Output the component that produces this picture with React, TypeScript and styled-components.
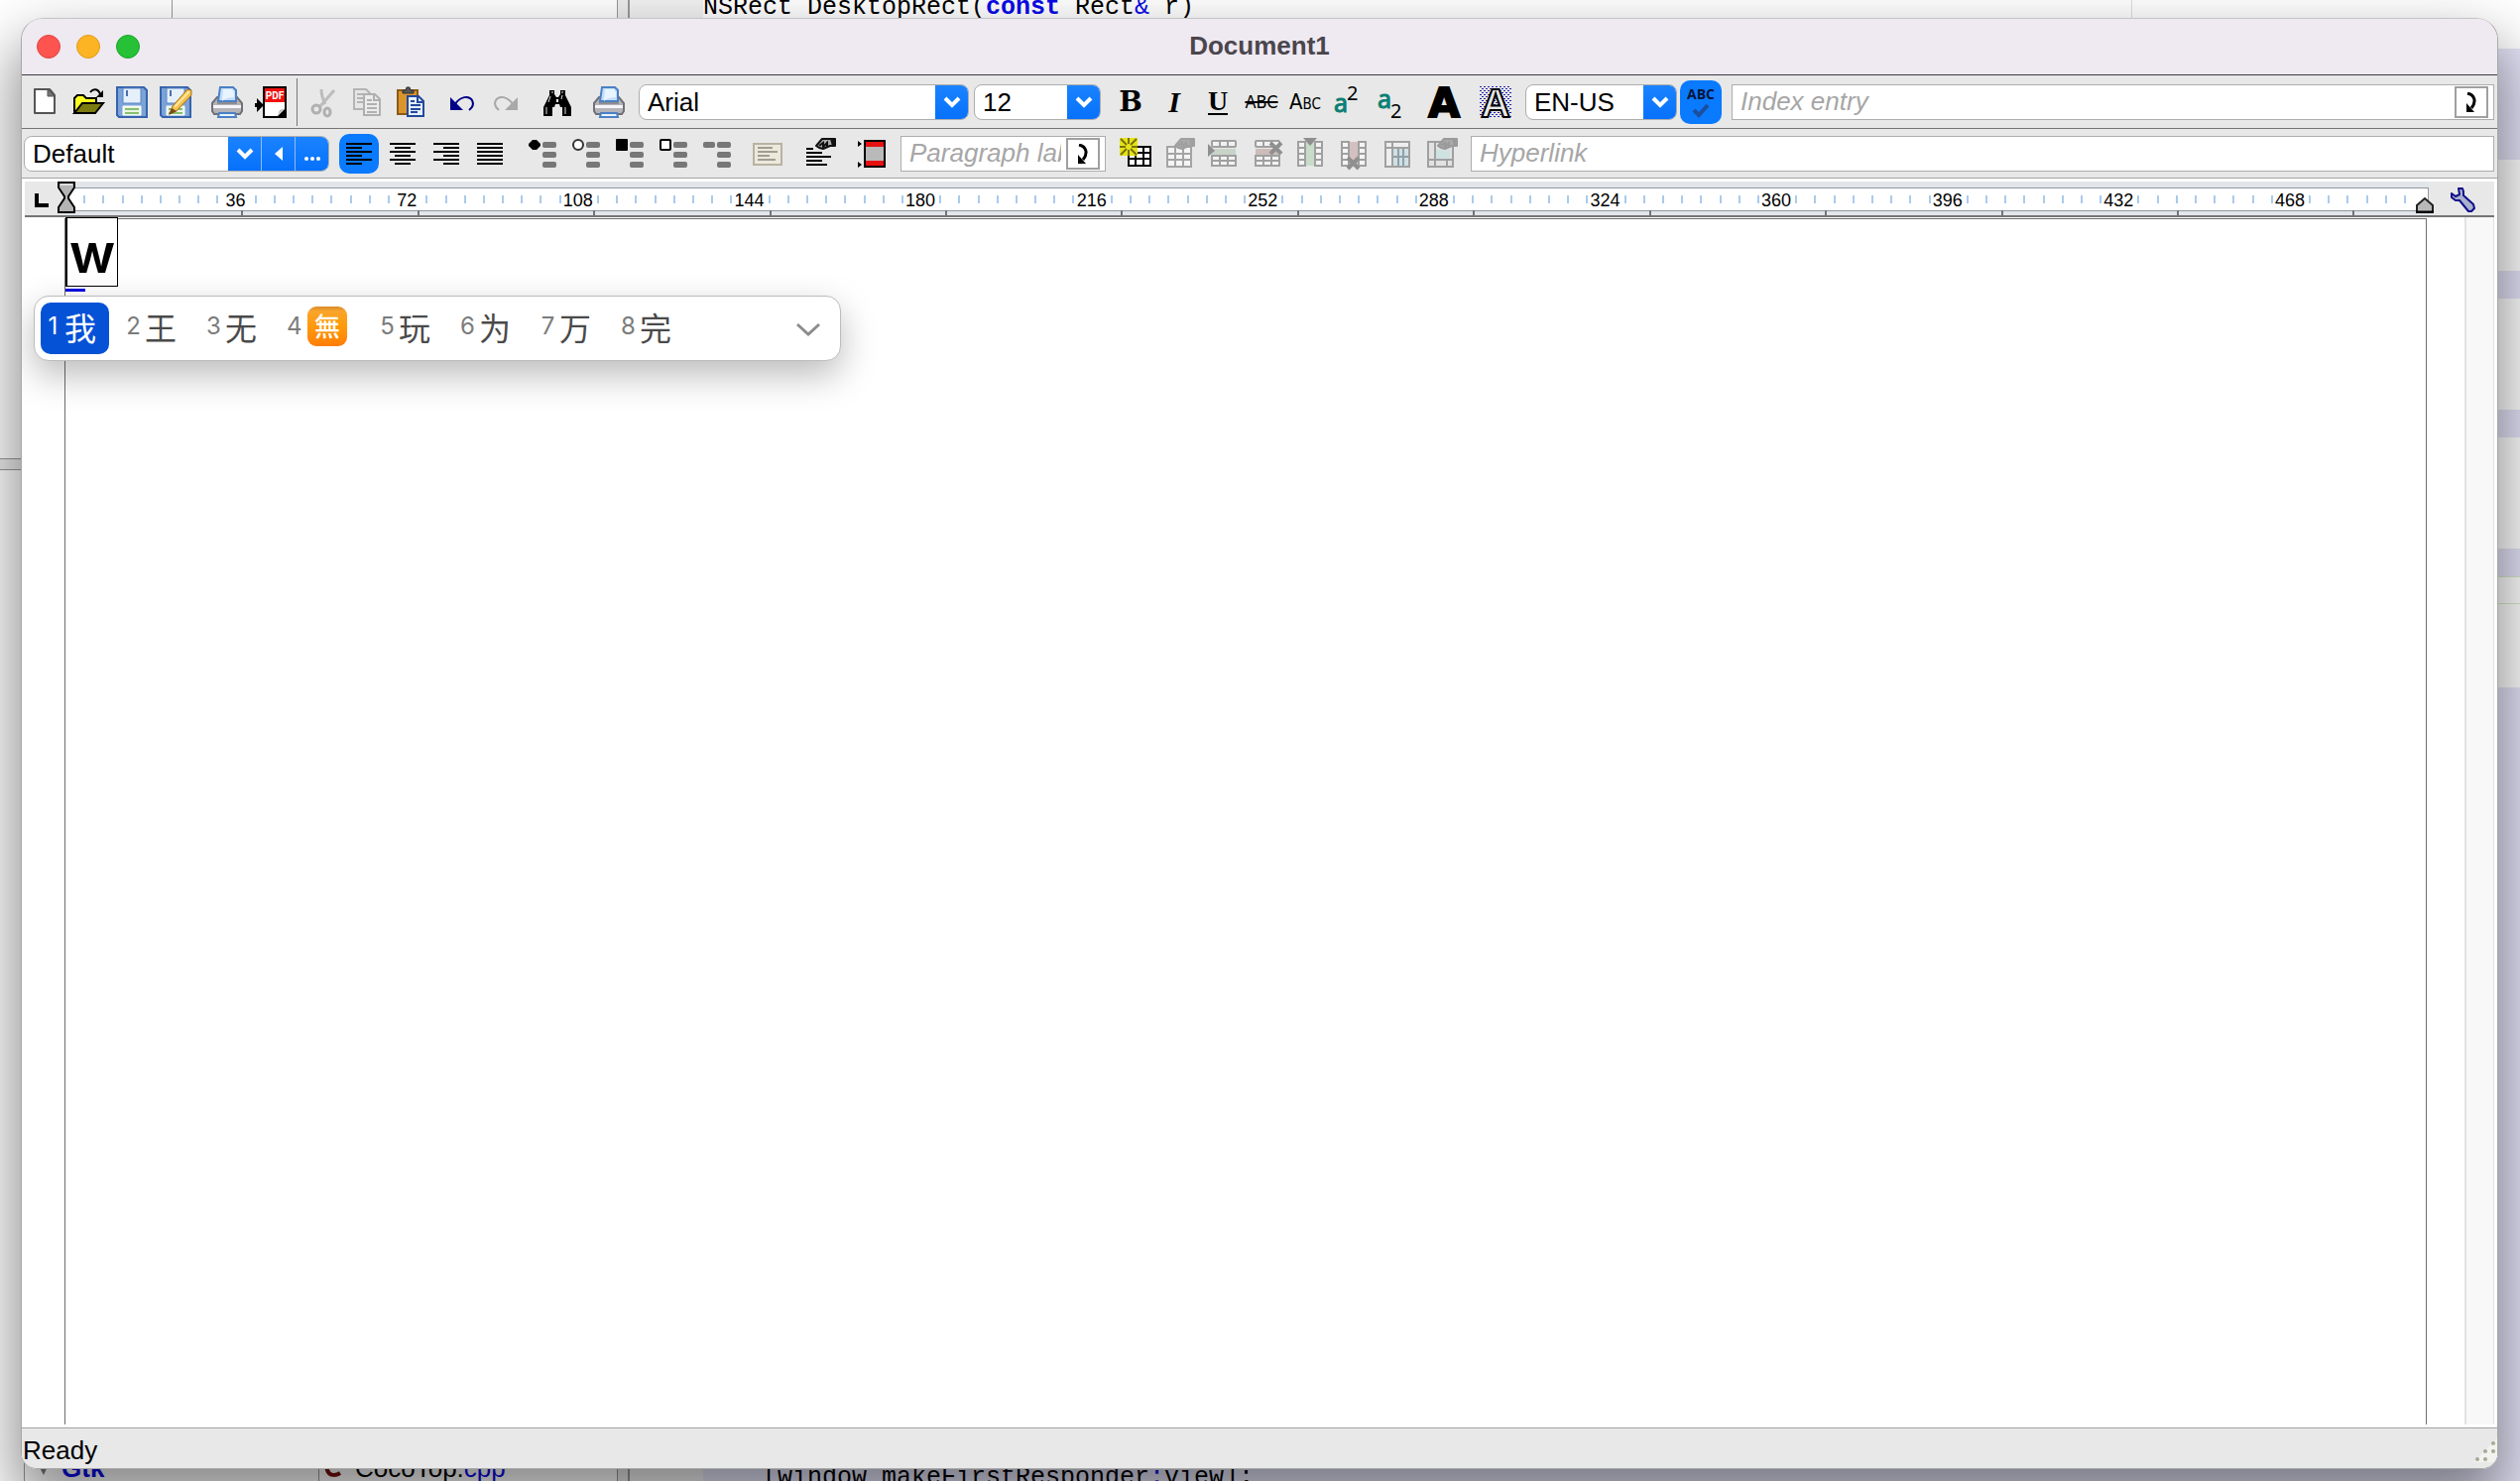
import React from "react";
import styled, { createGlobalStyle, css } from "styled-components";

const SANS = '"Liberation Sans", Arial, sans-serif';
const MONO = '"Liberation Mono", "Courier New", monospace';
const SYSTEM = 'Inter, "Noto Sans CJK SC", sans-serif';

const GlobalStyle = createGlobalStyle`
  * { box-sizing: border-box; }
  body { margin: 0; background: #fff; font-family: ${SANS}; font-size: 26px; color: #000; }
  button, input, select { font: inherit; color: inherit; margin: 0; }
`;

/* ---------- editor behind the window ---------- */

const Desktop = styled.div`
  position: relative;
  height: 100vh;
  overflow: hidden;
  padding: 18px 22px 12px 21px;
  display: flex;
`;

const Backdrop = styled.div`
  position: absolute;
  inset: 0;
  display: flex;
  overflow: hidden;
  background: #fff;
`;

const TreePane = styled.div`
  width: 622px;
  flex: none;
  display: flex;
  flex-direction: column;
`;

const TreeTop = styled.div`
  height: 462px;
  display: flex;
`;

const TreeColumn = styled.div`
  width: 174px;
  border-right: 1px solid #999;
`;

const Splitter = styled.div`
  height: 12px;
  background: #ececec;
  border: solid #999;
  border-width: 1px 0;
`;

const FileList = styled.div`
  flex: 1;
  display: grid;
  grid-template-columns: 296px 1fr;
  align-items: end;
  margin-left: 24px;
  border-left: 1px solid #999;
  margin-bottom: -4px;
  line-height: 28px;
`;

const FileCell = styled.div<{ $divided?: boolean }>`
  height: 34px;
  display: flex;
  align-items: center;
  gap: 11px;
  padding-left: ${(p) => (p.$divided ? 5 : 11)}px;
  border-left: ${(p) => (p.$divided ? "1px solid #999" : "0")};
`;

const Blue = styled.span<{ $bold?: boolean }>`
  color: #0a0ae8;
  font-weight: ${(p) => (p.$bold ? 700 : 400)};
`;

const PaneScroll = styled.div`
  width: 13px;
  flex: none;
  background: #ececec;
  border: solid #999;
  border-width: 0 2px 0 1px;
`;

const Gutter = styled.div`
  width: 74px;
  flex: none;
  background: #f2f2f2;
`;

const Code = styled.div`
  flex: 1;
  display: flex;
  flex-direction: column;
  margin: -7px 0 -11px;
  font-family: ${MONO};
  font-size: 25px;
  line-height: 28px;
  white-space: pre;
`;

const Band = styled.div<{ $lines: number; $tint?: boolean; $ruled?: boolean }>`
  flex: none;
  height: ${(p) => p.$lines * 28}px;
  background: ${(p) => (p.$tint ? "#e4e4f8" : "#fff")};
  ${(p) =>
    p.$ruled &&
    css`
      border: solid #d8ecc8;
      border-width: 1px 0;
    `}
`;

const LastBand = styled.div`
  flex: 1;
  display: flex;
  align-items: flex-end;
  padding-left: 60px;
  background: #e4e4f8;
`;

const MarginRule = styled.div`
  width: 1441px;
  height: 100%;
  border-right: 1px solid #ddd;
  line-height: 30px;
`;

/* ---------- window chrome ---------- */

const Window = styled.div`
  position: relative;
  flex: 1;
  min-width: 0;
  display: flex;
  flex-direction: column;
  background: #fff;
  border: 1px solid #a8a8a8;
  border-top-color: #c4c4c4;
  border-radius: 22px 22px 16px 16px;
  overflow: hidden;
`;

const WindowShadow = styled.div`
  position: relative;
  flex: 1;
  min-width: 0;
  display: flex;
  border-radius: 22px 22px 16px 16px;
  box-shadow: 0 30px 60px 6px rgba(0, 0, 0, 0.46);
`;

const TitleBar = styled.header`
  height: 57px;
  flex: none;
  display: grid;
  grid-template-columns: 1fr auto 1fr;
  align-items: center;
  padding: 0 15px;
  background: #efe9f1;
  border-bottom: 1px solid #3f3a44;
`;

const Lights = styled.div`
  display: flex;
  gap: 16px;
`;

const Light = styled.button<{ $color: string; $edge: string }>`
  width: 24px;
  height: 24px;
  padding: 0;
  border-radius: 50%;
  background: ${(p) => p.$color};
  border: 1px solid ${(p) => p.$edge};
`;

const Title = styled.h1`
  margin: 0;
  padding-bottom: 2px;
  font: 700 26px/32px ${SANS};
  color: #4a464d;
`;

const Toolbar = styled.div<{ $second?: boolean }>`
  height: ${(p) => (p.$second ? 50 : 54)}px;
  flex: none;
  display: flex;
  align-items: center;
  gap: 8px;
  padding: 0 3px 0 ${(p) => (p.$second ? 2 : 1)}px;
  background: #e8e8e8;
  border-bottom: 1px solid ${(p) => (p.$second ? "#a4a4a4" : "#757575")};
`;

const Group = styled.div<{ $gap?: number }>`
  flex: none;
  display: flex;
  align-items: center;
  gap: ${(p) => p.$gap ?? 0}px;
`;

const Divider = styled.div`
  width: 1px;
  height: 48px;
  margin: 0 -4px;
  background: #777;
`;

const ToolButton = styled.button<{ $active?: boolean }>`
  width: ${(p) => (p.$active ? 40 : 44)}px;
  height: 40px;
  margin: 0 ${(p) => (p.$active ? 2 : 0)}px;
  padding: 0;
  display: flex;
  align-items: center;
  justify-content: center;
  border: 0;
  border-radius: 10px;
  background: ${(p) => (p.$active ? "#0a7aff" : "transparent")};
  svg { display: block; flex: none; overflow: visible; }
`;

const SpellButton = styled.button`
  width: 42px;
  height: 44px;
  padding: 6px 0 0;
  flex: none;
  margin: 0 2px 0 -5px;
  display: flex;
  flex-direction: column;
  align-items: center;
  gap: 2px;
  border: 0;
  border-radius: 10px;
  background: #0a7aff;
  color: #06143a;
  font: 700 14px/16px "Open Sans", sans-serif;
`;

const Glyph = styled.span<{ $kind: "bold" | "italic" | "underline" | "strike" | "caps" }>`
  font-family: "DejaVu Serif", serif;
  font-size: 28px;
  line-height: 32px;
  font-weight: 700;
  ${(p) => p.$kind === "italic" && css`font-style: italic; font-size: 30px; font-family: "Liberation Serif", serif;`}
  ${(p) =>
    p.$kind === "underline" &&
    css`
      font-size: 28px;
      line-height: 24px;
      font-family: "Liberation Serif", serif;
      border-bottom: 2px solid #000;
    `}
  ${(p) =>
    (p.$kind === "strike" || p.$kind === "caps") &&
    css`
      font: 400 18px/32px "Liberation Sans Narrow", "DejaVu Sans Condensed", sans-serif;
    `}
  ${(p) => p.$kind === "strike" && css`text-decoration: line-through; text-decoration-thickness: 2px;`}
  ${(p) => p.$kind === "caps" && css`font-size: 22px; font-variant: small-caps;`}
`;

const Combo = styled.div<{ $width: number }>`
  width: ${(p) => p.$width}px;
  height: 36px;
  flex: none;
  display: flex;
  position: relative;
  border: 1px solid #adadad;
  border-radius: 8px;
  background: #fff;
  overflow: hidden;
`;

const Select = styled.select`
  flex: 1;
  min-width: 0;
  height: 34px;
  padding: 0 0 0 8px;
  border: 0;
  background: transparent;
  appearance: none;
  outline: none;
`;

const Cap = styled.span`
  position: absolute;
  inset: 0 0 0 auto;
  width: 33px;
  display: flex;
  align-items: center;
  justify-content: center;
  background: linear-gradient(#1b83ff, #0671fb);
  pointer-events: none;
`;

const StyleCap = styled(Cap)`
  position: static;
  flex: none;
`;

const CapButton = styled.button`
  width: 34px;
  height: 34px;
  padding: 0;
  display: flex;
  align-items: center;
  justify-content: center;
  border: 0;
  border-left: 1px solid #8dbcf5;
  background: linear-gradient(#1b83ff, #0671fb);
`;

const Field = styled.div<{ $width?: number }>`
  ${(p) => (p.$width ? css`width: ${p.$width}px; flex: none;` : css`flex: 1; min-width: 0;`)}
  height: 36px;
  display: flex;
  align-items: center;
  gap: 5px;
  border: 1px solid #adadad;
  background: #fff;
  padding-right: 5px;
`;

const FieldInput = styled.input`
  flex: 1;
  min-width: 0;
  height: 34px;
  padding: 0 0 0 8px;
  border: 0;
  outline: none;
  background: transparent;
  font-style: italic;
  &::placeholder { color: #a6a6a6; opacity: 1; }
`;

const FieldButton = styled.button`
  width: 34px;
  height: 32px;
  padding: 0;
  display: flex;
  align-items: center;
  justify-content: center;
  border: 2px solid #a0a0a0;
  background: #fff;
`;

/* ---------- ruler ---------- */

const Ruler = styled.div`
  flex: none;
  height: 36px;
  margin: 3px 3px 0;
  display: flex;
  background: #e8e8e8;
  border-bottom: 2px solid #747474;
`;

const TabStop = styled.button`
  width: 41px;
  padding: 12px 0 0 10px;
  display: flex;
  border: 0;
  background: transparent;
`;

const Scale = styled.div`
  position: relative;
  flex: 1;
  display: flex;
  flex-direction: column;
  padding-top: 6px;
  background: #e2e6ea;
`;

const Ticks = styled.div`
  flex: none;
  height: 24px;
  display: grid;
  grid-template-columns: 5fr repeat(123, 10fr) 7fr;
  align-items: center;
  background: #fff;
  border: solid #8f979f;
  border-width: 1px 1px 1px 0;
`;

const Tick = styled.span`
  min-width: 0;
  display: flex;
  justify-content: center;
  font-size: 18px;
  line-height: 20px;
  &::before {
    content: "";
    width: 2px;
    height: 8px;
    background: #a9cbee;
  }
`;

const TickLabel = styled(Tick)`
  padding: 2px 2px 0 0;
  &::before { display: none; }
`;

const Majors = styled.div`
  flex: 1;
  display: grid;
  grid-template-columns: 101fr repeat(12, 100fr) 42fr;
  margin-top: -1px;
`;

const Major = styled.span`
  border-right: 2px solid #747474;
  &:last-child { border: 0; }
`;

const Marker = styled.svg<{ $side: "left" | "right" }>`
  position: absolute;
  display: block;
  top: 0;
  ${(p) => (p.$side === "left" ? "left: -8px;" : "right: -5px;")}
`;

const RulerEnd = styled.button`
  width: 66px;
  padding: 6px 0 0 22px;
  display: flex;
  border: 0;
  background: transparent;
`;

/* ---------- document ---------- */

const Workspace = styled.main`
  flex: 1;
  min-height: 0;
  display: flex;
  padding: 0 3px 3px 43px;
`;

const Page = styled.section`
  position: relative;
  flex: 1;
  margin: 1px 38px 0 0;
  border: solid #6e6e6e;
  border-width: 1px 1px 0;
`;

const Composition = styled.div`
  width: 53px;
  height: 70px;
  margin-top: -2px;
  border: 1px solid #000;
  border-left-width: 2px;
  background: #fff;
  font: 600 55px/70px Inter, sans-serif;
  display: flex;
  justify-content: center;
`;

const InputMark = styled.div`
  width: 20px;
  height: 3px;
  margin-top: 2px;
  background: #0808e0;
`;

const Track = styled.div`
  width: 30px;
  flex: none;
  background: #f8f8f8;
  border: solid #e2e2e2;
  border-width: 0 1px 0 2px;
`;

const Candidates = styled.div`
  position: absolute;
  left: -32px;
  top: 77px;
  width: 814px;
  height: 66px;
  padding: 6px;
  display: flex;
  gap: 12px;
  border: 1px solid #bcbcbc;
  border-radius: 15px;
  background: #fff;
  box-shadow: 0 14px 36px rgba(0, 0, 0, 0.27);
  font-family: ${SYSTEM};
`;

const Candidate = styled.button<{ $selected?: boolean; $wide?: boolean }>`
  width: ${(p) => (p.$wide ? 82 : 69)}px;
  height: 52px;
  padding: 0 0 4px 5px;
  display: flex;
  align-items: center;
  gap: 4px;
  border: 0;
  border-radius: 10px;
  background: ${(p) => (p.$selected ? "#0552d6" : "transparent")};
  color: ${(p) => (p.$selected ? "#fff" : "#4a4a4a")};
  font: 400 32px/44px "Noto Sans CJK SC", sans-serif;
`;

const Num = styled.span<{ $selected?: boolean }>`
  width: 15px;
  text-align: center;
  font: 400 24px/44px ${SYSTEM};
  color: ${(p) => (p.$selected ? "#fff" : "#7c7c7c")};
`;

const Stamp = styled.span`
  width: 40px;
  height: 40px;
  margin-left: 2px;
  flex: none;
  border-radius: 9px;
  background: linear-gradient(#d98a2b, #f9a52c 12%, #ff9a0a 50%, #ff7e06);
  color: #fff;
  font: 500 26px/38px "Noto Sans CJK TC", sans-serif;
`;

const More = styled.button`
  margin: 0 14px 0 auto;
  padding: 0 0 4px;
  border: 0;
  background: transparent;
`;

const StatusBar = styled.footer`
  height: 41px;
  flex: none;
  display: flex;
  align-items: center;
  justify-content: space-between;
  padding: 4px 0 0 1px;
  background: #e8e8e8;
  border-top: 1px solid #a4a4a4;
`;

/* ---------- icons ---------- */

const Svg = ({ children, size = 32 }: { children: React.ReactNode; size?: number }) => (
  <svg width={size} height={size} viewBox="0 0 32 32" fill="none" aria-hidden="true">
    {children}
  </svg>
);

const Chevron = () => (
  <svg width="18" height="14" viewBox="0 0 18 14" fill="none" aria-hidden="true">
    <path d="M2 3 9 10 16 3" stroke="#fff" strokeWidth="4" />
  </svg>
);

const NewIcon = () => (
  <Svg>
    <path d="M6 3h15l5 6v18H6z" fill="#fff" stroke="#555" strokeWidth="2" strokeLinejoin="round" />
    <path d="M19 3v7h7z" fill="#777" stroke="#555" />
  </Svg>
);

const OpenIcon = () => (
  <Svg>
    <path d="M2 27V12l3-3h6l3 3h10v5" fill="#ffff20" stroke="#000" strokeWidth="2" />
    <path d="M2 27 10 17h21l-8 10z" fill="#7c7c10" stroke="#000" strokeWidth="2" />
    <path d="M18 6c3-4 8-4 10 2" stroke="#000" strokeWidth="2" />
    <path d="M31 4v7h-7z" fill="#000" />
  </Svg>
);

const Disk = () => (
  <>
    <path d="M1 1h27l3 3v27H3l-2-2z" fill="#7ba3d8" stroke="#3563ad" strokeWidth="2" />
    <path d="M7 2h18v15H7z" fill="#e6f0fb" stroke="#5b87c6" />
    <path d="M11 4v6" stroke="#4a70b0" strokeWidth="2" />
    <path d="M7 20h18v9H7z" fill="#eaf5e3" stroke="#fff" />
    <path d="M9 23h14M9 27h14" stroke="#86c070" strokeWidth="2" />
  </>
);

const SaveIcon = () => <Svg><Disk /></Svg>;

const SaveAsIcon = () => (
  <Svg>
    <Disk />
    <path d="m10 28 3-8L28 3l4 1v5L17 25z" fill="#f4c04a" stroke="#a8701c" />
    <path d="m15 21 15-16" stroke="#ffe79a" strokeWidth="2" />
    <path d="m9 29 3-7 5 3z" fill="#7d4a1a" />
  </Svg>
);

const PrintIcon = () => (
  <Svg>
    <path d="M1 17l5-6h20l5 6v8l-2 3H3l-2-3z" fill="#b4b4b8" stroke="#707076" strokeWidth="2" />
    <path d="M7 15 9 1h13l3 3v11z" fill="#c3defb" stroke="#4b80c4" strokeWidth="2" />
    <path d="M12 3h9l2 3v5c-5 0-9 1-12 4z" fill="#e8f4ff" />
    <path d="M2 19h28v3H2z" fill="#f6f6f8" />
    <path d="M6 17h20" stroke="#8c8c92" strokeWidth="2" />
    <path d="M8 27h16l1 4H7z" fill="#e8f3ff" stroke="#4b80c4" strokeWidth="2" />
  </Svg>
);

const PdfIcon = () => (
  <Svg>
    <path d="M9 1h22v30H9z" fill="#fff" stroke="#000" strokeWidth="2" />
    <path d="M10 2h20v14H10z" fill="#f01010" />
    <text x="20" y="13" textAnchor="middle" fontSize="10" fontWeight="700" fill="#fff" fontFamily="Roboto, sans-serif">
      PDF
    </text>
    <path d="M31 22v9h-9z" fill="#000" />
    <path d="m23 29 2-5 5-2" fill="#bbb" />
    <path d="M0 17h2v-5l7 7-7 7v-5H0z" fill="#000" />
  </Svg>
);

const CutIcon = () => (
  <Svg>
    <path d="M14 3c0 6 1 9 4 15M27 4 13 20" stroke="#bcbcbc" strokeWidth="3" />
    <ellipse cx="9" cy="23" rx="4" ry="4" stroke="#b0b0b0" strokeWidth="3" />
    <ellipse cx="20" cy="26" rx="3" ry="4" stroke="#b0b0b0" strokeWidth="3" />
  </Svg>
);

const CopyIcon = () => (
  <Svg>
    <path d="M3 3h12l4 4v16H3z" fill="#e6e6e6" stroke="#b4b4b4" strokeWidth="2" />
    <path d="M6 8h6M6 12h6M6 16h6" stroke="#b4b4b4" strokeWidth="2" />
    <path d="M13 8h11l5 5v16H13z" fill="#ececec" stroke="#b0b0b0" strokeWidth="2" />
    <path d="M23 8v6h6M16 14h5M16 18h10M16 22h10M16 26h10" stroke="#b0b0b0" strokeWidth="2" />
  </Svg>
);

const PasteIcon = () => (
  <Svg>
    <path d="M3 4h20v24H3z" fill="#d9952c" stroke="#8c5a14" strokeWidth="2" />
    <path d="M8 7V4h3l1-3h3l1 3h3v3z" fill="#555" stroke="#333" />
    <path d="M13 10h11l5 5v15H13z" fill="#e4effd" stroke="#24489a" strokeWidth="2" />
    <path d="M23 10v6h6M16 15h4M16 19h10M16 23h10M16 26h7" stroke="#24489a" strokeWidth="2" />
  </Svg>
);

const UndoIcon = () => (
  <Svg>
    <path d="M9 18C14 10 23 9 26 14c2 4 1 7-3 10" stroke="#000088" strokeWidth="2" />
    <path d="M4 11v13h13z" fill="#000088" />
  </Svg>
);

const RedoIcon = () => (
  <Svg>
    <path d="M23 18C18 10 9 9 6 14c-2 4-1 7 3 10" stroke="#a9a9a9" strokeWidth="2" />
    <path d="M28 11v13H15z" fill="#a9a9a9" />
  </Svg>
);

const FindIcon = () => (
  <Svg>
    <path d="M8 4h5v4l2 3h2l2-3V4h5v5l6 12v9h-9v-9h-2l-1-3h-4l-1 3h-2v9H2v-9L8 9z" fill="#000" />
    <path d="M5 21v7M24 21v7M9 10 7 16M21 9l-1 4M10 6h2M20 6h2" stroke="#ddd" />
    <path d="M16 13v3" stroke="#eee" strokeWidth="2" />
  </Svg>
);

const SuperIcon = ({ sub }: { sub?: boolean }) => (
  <Svg>
    <text x="1" y={sub ? 22 : 26} fontSize="25" fontFamily="Noto Sans, sans-serif" fill="#0a8074" stroke="#0a8074">a</text>
    <text x="14" y={sub ? 32 : 14} fontSize="20" fontFamily="Noto Sans, sans-serif" fill="#000">2</text>
  </Svg>
);

const LetterIcon = ({ outline }: { outline?: boolean }) => (
  <Svg>
    <defs>
      <pattern id="dots" width="4" height="4" patternUnits="userSpaceOnUse">
        <path d="M0 0h2v1H0zM2 2h2v1H2z" fill="#2424b0" />
      </pattern>
    </defs>
    {outline && <path d="M0 0h32v31H0z" fill="url(#dots)" />}
    <text
      x="16"
      y="31"
      textAnchor="middle"
      fontSize="41"
      fontWeight="700"
      fontFamily={outline ? "Liberation Sans, sans-serif" : "DejaVu Sans, sans-serif"}
      fill={outline ? "#e8e8e8" : "#000"}
      stroke="#000"
      strokeWidth="2"
    >
      A
    </text>
  </Svg>
);

const AlignIcon = ({ mode }: { mode: "left" | "center" | "right" | "full" }) => (
  <Svg>
    {[0, 1, 2, 3, 4, 5].map((i) => {
      const w = mode === "full" || i % 2 === 0 ? 26 : 16;
      const x = mode === "left" ? 3 : mode === "right" ? 29 - w : 16 - w / 2;
      return <rect key={i} x={x} y={5 + i * 4} width={w} height="2" fill="#000" />;
    })}
  </Svg>
);

const ListIcon = ({ mark }: { mark: "disc" | "circle" | "square" | "box" | "dash" }) => (
  <Svg>
    {[4, 14, 24].map((y) => (
      <rect key={y} x="17" y={y} width="14" height="6" rx="2" fill="#777" />
    ))}
    {mark === "disc" && <path d="M7 2h4l4 4v2l-4 4H7L3 8V6z" fill="#000" />}
    {mark === "circle" && <circle cx="9" cy="7" r="5" fill="#fff" stroke="#333" strokeWidth="2" />}
    {mark === "square" && <rect x="3" y="1" width="12" height="12" rx="1" fill="#000" />}
    {mark === "box" && <rect x="4" y="2" width="10" height="10" rx="1" fill="#fff" stroke="#000" strokeWidth="2" />}
    {mark === "dash" && <rect x="3" y="4" width="12" height="6" rx="2" fill="#777" />}
  </Svg>
);

const ParagraphIcon = () => (
  <Svg>
    <path d="M2 6h28v21H2z" fill="#ece8dc" stroke="#b8b2a2" strokeWidth="2" />
    <path d="M6 10h15M6 14h20M6 18h12M6 22h18" stroke="#a29d90" strokeWidth="2" />
  </Svg>
);

const HandShape = ({ tone, x = 0 }: { tone: string; x?: number }) => (
  <g transform={`translate(${x} 0)`}>
    <path d="M12 8 18 1h13v7h-5l-7 3-4-1z" fill="#aaa" stroke={tone} strokeWidth="2" strokeLinejoin="round" />
    <path d="m15 8 4-3v4l4-4v4" stroke={tone} strokeWidth="2" />
    <path d="M26 1h5v7h-3z" fill={tone} />
  </g>
);

const ParaPropsIcon = () => (
  <Svg>
    <path d="M3 11h7M3 15h16M3 19h25M3 23h16M3 27h21" stroke="#000" strokeWidth="2" />
    <HandShape tone="#111" x={1} />
  </Svg>
);

const FrameIcon = () => (
  <Svg>
    <rect x="10" y="3" width="20" height="26" fill="#b9b9b9" stroke="#000" strokeWidth="2" />
    <path d="M11 4h18v5H11zM11 23h18v5H11z" fill="#e81010" />
    <path d="M3 3l4 3-4 3zM3 24l4 3-4 3z" fill="#000" />
  </Svg>
);

const TableShape = ({ tone, fill = "#f4f4f4" }: { tone: string; fill?: string }) => (
  <>
    <path d="M4 9h24v20H4z" fill={fill} stroke={tone} strokeWidth="2" />
    <path d="M4 16h24M4 22h24M12 9v20M20 9v20" stroke={tone} strokeWidth="2" />
  </>
);

const TableInsertIcon = () => (
  <Svg>
    <path d="M9 9h22v19H9z" fill="#fff" stroke="#000" strokeWidth="2" />
    <path d="M9 15h22M9 21h22M16 9v19M24 9v19" stroke="#000" strokeWidth="2" />
    <path d="M0 0h18v18H0z" fill="#e6e21a" />
    <path d="M9 0v6M9 12v6M0 9h6M12 9h6M1 1l6 6M17 1l-6 6M1 17l6-6M17 17l-6-6" stroke="#77730a" strokeWidth="2" />
  </Svg>
);

const TablePropsIcon = () => (
  <Svg>
    <TableShape tone="#a4a4a4" />
    <HandShape tone="#a0a0a0" />
  </Svg>
);

const RowIcon = ({ remove }: { remove?: boolean }) => (
  <Svg>
    <rect x="5" y="3" width="24" height="6" rx="1" fill="#f2f2f2" stroke="#a0a0a0" strokeWidth="2" />
    <path d="M5 11h24v6H5z" fill={remove ? "#cdbcbc" : "#c8d4c8"} />
    <path d="M5 18h24v10H5zM5 23h24M13 18v10M21 18v10M13 3v6M21 3v6" fill="#f2f2f2" stroke="#a0a0a0" strokeWidth="2" />
    {remove ? (
      <path d="m20 5 11 11m0-11L20 16" stroke="#8f8f8f" strokeWidth="4" />
    ) : (
      <path d="M1 6v13l7-6z" fill="#8f8f8f" />
    )}
  </Svg>
);

const ColumnIcon = ({ remove }: { remove?: boolean }) => (
  <Svg>
    <path d="M12 4h8v24h-8z" fill={remove ? "#d3c0c0" : "#c8dcc8"} />
    <path d="M4 4h7v24H4zM21 4h7v24h-7zM4 10h7M4 16h7M4 22h7M21 10h7M21 16h7M21 22h7" fill="#f4f4f4" stroke="#a0a0a0" strokeWidth="2" />
    {remove ? (
      <path d="m10 20 11 11m0-11L10 31" stroke="#8f8f8f" strokeWidth="4" />
    ) : (
      <path d="M9 0h14l-7 8z" fill="#8f8f8f" />
    )}
  </Svg>
);

const CellsIcon = () => (
  <Svg>
    <path d="M4 4h24v25H4zM4 10h24M11 4v25" fill="#eee" stroke="#a0a0a0" strokeWidth="2" />
    <path d="M12 11h15v17H12z" fill="#cfe0e4" />
    <path d="M17 11v17M22 11v17M12 19h15" stroke="#90a0a6" strokeWidth="2" />
  </Svg>
);

const CellPropsIcon = () => (
  <Svg>
    <path d="M3 4h25v25H3zM3 22h25M10 4v25M22 22v7" fill="#e2e2e2" stroke="#a0a0a0" strokeWidth="2" />
    <path d="M11 12h14v9H11z" fill="#cfe2e2" />
    <HandShape tone="#9a9a9a" x={1} />
  </Svg>
);

const HookIcon = () => (
  <svg width="12" height="20" viewBox="0 0 12 20" fill="none" aria-hidden="true">
    <path d="M2 1c8 2 9 9 4 15" stroke="#000" strokeWidth="3" />
    <path d="M1 11v9h8z" fill="#000" />
  </svg>
);

const TabIcon = () => (
  <svg width="14" height="14" viewBox="0 0 14 14" fill="none" aria-hidden="true">
    <path d="M2 0v12h12" stroke="#000" strokeWidth="4" />
  </svg>
);

const WrenchIcon = () => (
  <svg width="26" height="25" viewBox="0 0 26 25" fill="none" aria-hidden="true">
    <path
      d="M8 1h4l1 3v4l10 9 1 4-3 3h-3L9 13H5L1 10V6l4 3 4-2z"
      fill="#aab0cc"
      stroke="#10108c"
      strokeWidth="2"
      strokeLinejoin="round"
    />
  </svg>
);

/* ---------- data ---------- */

const tickSlots = Array.from({ length: 123 }, (_, i) => i + 1);

const candidates = [
  { n: 1, char: "我" },
  { n: 2, char: "王" },
  { n: 3, char: "无" },
  { n: 4, char: "無", stamp: true },
  { n: 5, char: "玩" },
  { n: 6, char: "为" },
  { n: 7, char: "万" },
  { n: 8, char: "完" },
];

type Tool = [label: string, icon: React.ReactNode, active?: boolean];

const Tools = ({ items }: { items: Tool[] }) => (
  <Group>
    {items.map(([label, icon, active]) => (
      <ToolButton key={label} type="button" aria-label={label} aria-pressed={active} $active={active}>
        {icon}
      </ToolButton>
    ))}
  </Group>
);

const DropDown = ({ label, value, width }: { label: string; value: string; width: number }) => (
  <Combo $width={width}>
    <Select aria-label={label} defaultValue={value}>
      <option>{value}</option>
    </Select>
    <Cap><Chevron /></Cap>
  </Combo>
);

/* ---------- page ---------- */

export default function App() {
  return (
    <Desktop>
      <GlobalStyle />
      <Backdrop>
        <TreePane>
          <TreeTop><TreeColumn /></TreeTop>
          <Splitter />
          <FileList>
            <FileCell>
              <svg width="15" height="18" viewBox="0 0 15 18" aria-hidden="true">
                <path d="M0 1h15L8 16z" fill="#777" />
              </svg>
              <Blue $bold>Gtk</Blue>
            </FileCell>
            <FileCell $divided>
              <svg width="20" height="22" viewBox="0 0 20 22" fill="none" aria-hidden="true">
                <path d="M14 4C6 0 1 6 3 13c2 6 8 6 13 3" stroke="#7a1010" strokeWidth="4" />
              </svg>
              <span>CocoTop.<Blue>cpp</Blue></span>
            </FileCell>
          </FileList>
        </TreePane>
        <PaneScroll />
        <Gutter />
        <Code>
          <Band $lines={2}>
            <MarginRule>
              NSRect DesktopRect(<Blue $bold>const</Blue> Rect<Blue>&amp;</Blue> r)
            </MarginRule>
          </Band>
          <Band $lines={4} $tint />
          <Band $lines={4} />
          <Band $lines={1} $tint />
          <Band $lines={4} />
          <Band $lines={1} $tint />
          <Band $lines={4} />
          <Band $lines={1} $tint />
          <Band $lines={1} $ruled />
          <Band $lines={3} />
          <LastBand>
            <span>[window makeFirstResponder<Blue>:</Blue>view];</span>
          </LastBand>
        </Code>
      </Backdrop>

      <WindowShadow>
        <Window>
          <TitleBar>
            <Lights>
              <Light type="button" aria-label="Close" $color="#fe5450" $edge="#e0443e" />
              <Light type="button" aria-label="Minimize" $color="#fdb424" $edge="#de9b1c" />
              <Light type="button" aria-label="Zoom" $color="#26c136" $edge="#1aa52a" />
            </Lights>
            <Title>Document1</Title>
          </TitleBar>

          <Toolbar role="toolbar" aria-label="Standard">
            <Tools items={[["New", <NewIcon />], ["Open", <OpenIcon />], ["Save", <SaveIcon />], ["Save as", <SaveAsIcon />]]} />
            <Tools items={[["Print", <PrintIcon />], ["Export PDF", <PdfIcon />]]} />
            <Divider />
            <Tools items={[["Cut", <CutIcon />], ["Copy", <CopyIcon />], ["Paste", <PasteIcon />]]} />
            <Tools items={[["Undo", <UndoIcon />], ["Redo", <RedoIcon />]]} />
            <Tools items={[["Find", <FindIcon />]]} />
            <Tools items={[["Print preview", <PrintIcon />]]} />
            <Group $gap={5}>
              <DropDown label="Font" value="Arial" width={333} />
              <DropDown label="Size" value="12" width={128} />
            </Group>
            <Tools
              items={[
                ["Bold", <Glyph $kind="bold">B</Glyph>],
                ["Italic", <Glyph $kind="italic">I</Glyph>],
                ["Underline", <Glyph $kind="underline">U</Glyph>],
                ["Strikeout", <Glyph $kind="strike">ABC</Glyph>],
                ["Small caps", <Glyph $kind="caps">Abc</Glyph>],
                ["Superscript", <SuperIcon />],
                ["Subscript", <SuperIcon sub />],
              ]}
            />
            <Tools items={[["Text color", <LetterIcon />]]} />
            <Tools items={[["Background color", <LetterIcon outline />]]} />
            <DropDown label="Language" value="EN-US" width={153} />
            <SpellButton type="button" aria-label="Spell check">
              ABC
              <svg width="18" height="14" viewBox="0 0 18 14" fill="none" aria-hidden="true">
                <path d="m2 6 5 5 9-10" stroke="#1c4f9e" strokeWidth="4" />
              </svg>
            </SpellButton>
            <Field>
              <FieldInput aria-label="Index entry" placeholder="Index entry" />
              <FieldButton type="button" aria-label="Insert index entry"><HookIcon /></FieldButton>
            </Field>
          </Toolbar>

          <Toolbar $second role="toolbar" aria-label="Paragraph">
            <Combo $width={308}>
              <Select aria-label="Style" defaultValue="Default">
                <option>Default</option>
              </Select>
              <StyleCap><Chevron /></StyleCap>
              <CapButton type="button" aria-label="Apply style">
                <svg width="8" height="14" viewBox="0 0 8 14" aria-hidden="true">
                  <path d="M8 0v14L0 7z" fill="#fff" />
                </svg>
              </CapButton>
              <CapButton type="button" aria-label="Manage styles">
                <svg width="18" height="16" viewBox="0 0 18 16" fill="#fff" aria-hidden="true">
                  <circle cx="3" cy="13" r="2" />
                  <circle cx="9" cy="13" r="2" />
                  <circle cx="15" cy="13" r="2" />
                </svg>
              </CapButton>
            </Combo>
            <Tools
              items={[
                ["Align left", <AlignIcon mode="left" />, true],
                ["Center", <AlignIcon mode="center" />],
                ["Align right", <AlignIcon mode="right" />],
                ["Justify", <AlignIcon mode="full" />],
              ]}
            />
            <Tools
              items={[
                ["Bullets", <ListIcon mark="disc" />],
                ["Circles", <ListIcon mark="circle" />],
                ["Squares", <ListIcon mark="square" />],
                ["Boxes", <ListIcon mark="box" />],
                ["Numbering", <ListIcon mark="dash" />],
              ]}
            />
            <Tools items={[["Background", <ParagraphIcon />]]} />
            <Tools items={[["Paragraph properties", <ParaPropsIcon />]]} />
            <Tools items={[["Header and footer", <FrameIcon />]]} />
            <Field $width={207}>
              <FieldInput aria-label="Paragraph label" placeholder="Paragraph label" />
              <FieldButton type="button" aria-label="Set paragraph label"><HookIcon /></FieldButton>
            </Field>
            <Tools
              items={[
                ["Insert table", <TableInsertIcon />],
                ["Table properties", <TablePropsIcon />],
                ["Insert row", <RowIcon />],
                ["Remove row", <RowIcon remove />],
                ["Insert column", <ColumnIcon />],
                ["Remove column", <ColumnIcon remove />],
                ["Split cell", <CellsIcon />],
                ["Cell properties", <CellPropsIcon />],
              ]}
            />
            <Field>
              <FieldInput aria-label="Hyperlink" placeholder="Hyperlink" />
            </Field>
          </Toolbar>

          <Ruler>
            <TabStop type="button" aria-label="Left tab"><TabIcon /></TabStop>
            <Scale>
              <Ticks>
                <span />
                {tickSlots.map((i) =>
                  i % 9 === 0 ? <TickLabel key={i}>{i * 4}</TickLabel> : <Tick key={i} />
                )}
              </Ticks>
              <Majors>
                {Array.from({ length: 14 }, (_, i) => <Major key={i} />)}
              </Majors>
              <Marker $side="left" width="18" height="32" viewBox="0 0 18 32" aria-hidden="true">
                <path d="M1 1h16v5l-6 9v2l6 9v5H1v-5l6-9v-2L1 6z" fill="#b4b4b4" stroke="#000" strokeWidth="2" />
                <path d="M3 3h12" stroke="#ddd" strokeWidth="2" />
              </Marker>
              <Marker $side="right" width="18" height="32" viewBox="0 0 18 32" aria-hidden="true">
                <path d="M1 31v-7l8-7 8 7v7z" fill="#b8b8b8" stroke="#222" strokeWidth="2" />
                <path d="M0 31h18" stroke="#000" strokeWidth="3" />
              </Marker>
            </Scale>
            <RulerEnd type="button" aria-label="Ruler settings"><WrenchIcon /></RulerEnd>
          </Ruler>

          <Workspace>
            <Page>
              <Composition>w</Composition>
              <InputMark />
              <Candidates>
                {candidates.map(({ n, char, stamp }) => (
                  <Candidate key={n} type="button" $selected={n === 1} $wide={stamp}>
                    <Num $selected={n === 1}>{n}</Num>
                    {stamp ? <Stamp>{char}</Stamp> : <span>{char}</span>}
                  </Candidate>
                ))}
                <More type="button" aria-label="More candidates">
                  <svg width="24" height="14" viewBox="0 0 24 14" fill="none" aria-hidden="true">
                    <path d="m1 2 11 10L23 2" stroke="#8c8c8c" strokeWidth="3" />
                  </svg>
                </More>
              </Candidates>
            </Page>
            <Track />
          </Workspace>

          <StatusBar>
            <span>Ready</span>
            <svg width="24" height="24" viewBox="0 0 24 24" fill="#a8a898" aria-hidden="true">
              <path d="M0 24 24 0v24z" fill="#f2f2ee" />
              <circle cx="20" cy="5" r="2" />
              <circle cx="12" cy="13" r="2" />
              <circle cx="20" cy="13" r="2" />
              <circle cx="4" cy="21" r="2" />
              <circle cx="12" cy="21" r="2" />
            </svg>
          </StatusBar>
        </Window>
      </WindowShadow>
    </Desktop>
  );
}
